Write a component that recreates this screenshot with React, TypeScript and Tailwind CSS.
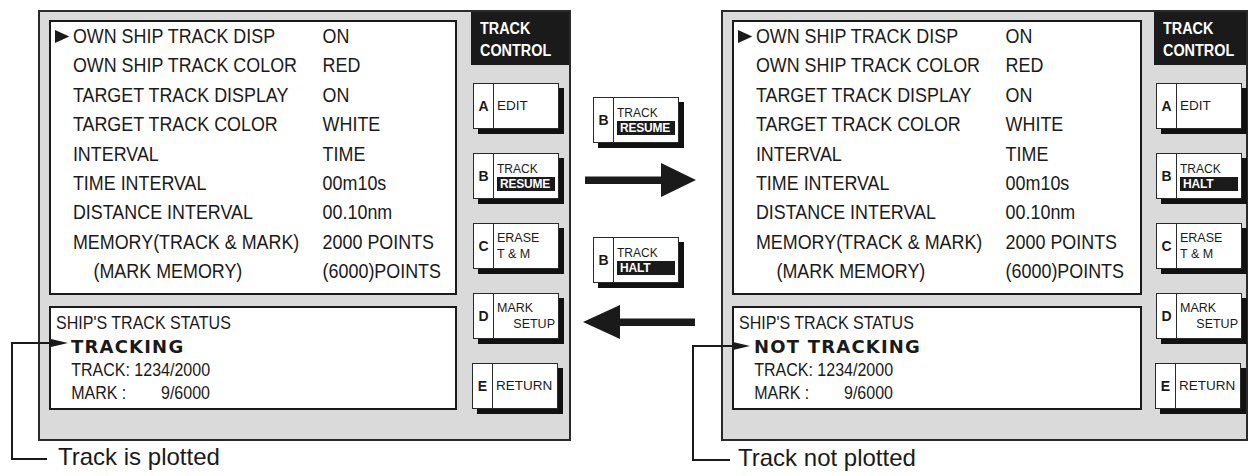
import React from "react";

const rows: [string, string, boolean?][] = [
  ["OWN SHIP TRACK DISP", "ON"],
  ["OWN SHIP TRACK COLOR", "RED"],
  ["TARGET TRACK DISPLAY", "ON"],
  ["TARGET TRACK COLOR", "WHITE"],
  ["INTERVAL", "TIME"],
  ["TIME INTERVAL", "00m10s"],
  ["DISTANCE INTERVAL", "00.10nm"],
  ["MEMORY(TRACK & MARK)", "2000 POINTS"],
  ["(MARK MEMORY)", "(6000)POINTS", true],
];

function Btn({
  letter,
  children,
  className = "",
}: {
  letter: string;
  children: React.ReactNode;
  className?: string;
}) {
  return (
    <div
      className={`flex h-[46px] w-[86px] border border-[#2a2a2a] bg-white shadow-[5px_5px_0_#111] ${className}`}
    >
      <div className="flex w-[20px] shrink-0 items-center justify-center border-r border-[#2a2a2a] text-[14px] font-bold text-[#1a1a1a]">
        {letter}
      </div>
      <div className="flex flex-1 flex-col justify-center pl-[3px] pr-[3px] text-[#1a1a1a]">
        {children}
      </div>
    </div>
  );
}

function TrackBtn({ mode, className = "" }: { mode: "RESUME" | "HALT"; className?: string }) {
  return (
    <Btn letter="B" className={className}>
      <div className="text-[12px] leading-[14px]">TRACK</div>
      <div className="mt-[1px] bg-[#1a1a1a] pl-[3px] text-[12px] font-bold leading-[14px] tracking-[-0.2px] text-white">
        {mode}
      </div>
    </Btn>
  );
}

function Frame({
  width,
  panelW,
  gap,
  headW,
  status,
  mode,
}: {
  width: number;
  panelW: number;
  gap: number;
  headW: number;
  status: string;
  mode: "RESUME" | "HALT";
}) {
  return (
    <div
      className="flex h-[431px] border-2 border-[#2a2a2a] bg-[#dadada]"
      style={{ width }}
    >
      <div className="ml-[9px] flex shrink-0 flex-col gap-[11px] pt-[8px]" style={{ width: panelW }}>
        <div className="h-[275px] overflow-hidden border-2 border-[#1a1a1a] bg-white pl-[4px] text-[20px] leading-[29.4px] text-[#1a1a1a]">
          <div className="w-max origin-left scale-x-[0.895]">
            {rows.map(([l, v, ind], i) => (
              <div key={i} className="flex items-center whitespace-nowrap">
                <div className="flex w-[20px] shrink-0 items-center">
                  {i === 0 && (
                    <svg width="16" height="13" viewBox="0 0 16 13">
                      <polygon points="0,0 16,6.5 0,13" fill="#1a1a1a" />
                    </svg>
                  )}
                </div>
                <div className={`w-[279px] shrink-0 ${ind ? "pl-[23px]" : ""}`}>{l}</div>
                <div className="shrink-0">{v}</div>
              </div>
            ))}
          </div>
        </div>
        <div className="h-[104px] border-2 border-[#1a1a1a] bg-white pl-[5px] pt-[4px] text-[18px] leading-[23.4px] text-[#1a1a1a]">
          <div className="origin-left scale-x-[0.89] whitespace-nowrap">SHIP'S TRACK STATUS</div>
          <div
            className="pl-[15px] text-[18px] font-bold tracking-[1.2px] whitespace-nowrap"
            style={{ fontFamily: "'DejaVu Sans', 'Liberation Sans', sans-serif" }}
          >
            {status}
          </div>
          <div className="origin-left scale-x-[0.89] whitespace-nowrap pl-[17px]">TRACK: 1234/2000</div>
          <div className="origin-left scale-x-[0.89] whitespace-pre pl-[17px]">
            MARK :<span className="inline-block w-[94px] text-right">9/6000</span>
          </div>
        </div>
      </div>
      <div className="flex shrink-0 flex-col" style={{ marginLeft: gap, width: headW }}>
        <div className="h-[53px] bg-[#1a1a1a] pl-[9px] pt-[6px] text-[16px] font-bold leading-[22px] text-white">
          <div className="origin-left scale-x-[0.9]">TRACK</div>
          <div className="origin-left scale-x-[0.9]">CONTROL</div>
        </div>
        <div className="flex flex-col gap-[24px] pl-[2px] pt-[18px]">
          <Btn letter="A">
            <div className="text-[13.5px] leading-[16px]">EDIT</div>
          </Btn>
          <TrackBtn mode={mode} />
          <Btn letter="C">
            <div className="text-[12.5px] leading-[16px]">ERASE</div>
            <div className="text-[12.5px] leading-[16px]">T &amp; M</div>
          </Btn>
          <Btn letter="D">
            <div className="text-[12.5px] leading-[16px]">MARK</div>
            <div className="text-right text-[12.5px] leading-[16px]">SETUP</div>
          </Btn>
          <Btn letter="E" className="ml-[-1px]">
            <div className="text-[13.5px] leading-[16px]">RETURN</div>
          </Btn>
        </div>
      </div>
    </div>
  );
}

export default function App() {
  return (
    <div
      className="relative h-[476px] w-[1250px] overflow-hidden bg-white text-[#1a1a1a]"
      style={{ fontFamily: "'Liberation Sans', Arial, sans-serif" }}
    >
      <div className="flex items-start pl-[38px]">
        <div className="flex shrink-0 flex-col pt-[10px]">
          <Frame width={533} panelW={408} gap={14} headW={98} status="TRACKING" mode="RESUME" />
          <div className="ml-[20px] mt-[2px] text-[24px] leading-[28px]">Track is plotted</div>
        </div>
        <div className="flex w-[150px] shrink-0 flex-col pt-[97px]">
          <TrackBtn mode="RESUME" className="ml-[22px]" />
          <svg className="ml-[14px] mt-[20px]" width="112" height="34" viewBox="0 0 112 34">
            <rect x="0" y="13.5" width="78" height="7.5" fill="#1a1a1a" />
            <polygon points="76,0 111,17 76,34" fill="#1a1a1a" />
          </svg>
          <TrackBtn mode="HALT" className="ml-[22px] mt-[40px]" />
          <svg className="ml-[12px] mt-[22px]" width="113" height="34" viewBox="0 0 113 34">
            <polygon points="0,17 37,0 37,34" fill="#1a1a1a" />
            <rect x="35" y="13.5" width="77" height="7.5" fill="#1a1a1a" />
          </svg>
        </div>
        <div className="flex shrink-0 flex-col pt-[10px]">
          <Frame width={527} panelW={410} gap={12} headW={92} status="NOT TRACKING" mode="HALT" />
          <div className="ml-[17px] mt-[3px] text-[24px] leading-[28px]">Track not plotted</div>
        </div>
      </div>
      <svg
        className="pointer-events-none absolute left-0 top-0"
        width="1250"
        height="476"
        viewBox="0 0 1250 476"
      >
        <path d="M47 459 H12 V343 H54" fill="none" stroke="#1a1a1a" strokeWidth="2" />
        <polygon points="51,339 68,343 51,347" fill="#1a1a1a" />
        <path d="M730 460 H693 V346 H736" fill="none" stroke="#1a1a1a" strokeWidth="2" />
        <polygon points="733,342 750,346 733,350" fill="#1a1a1a" />
      </svg>
    </div>
  );
}
